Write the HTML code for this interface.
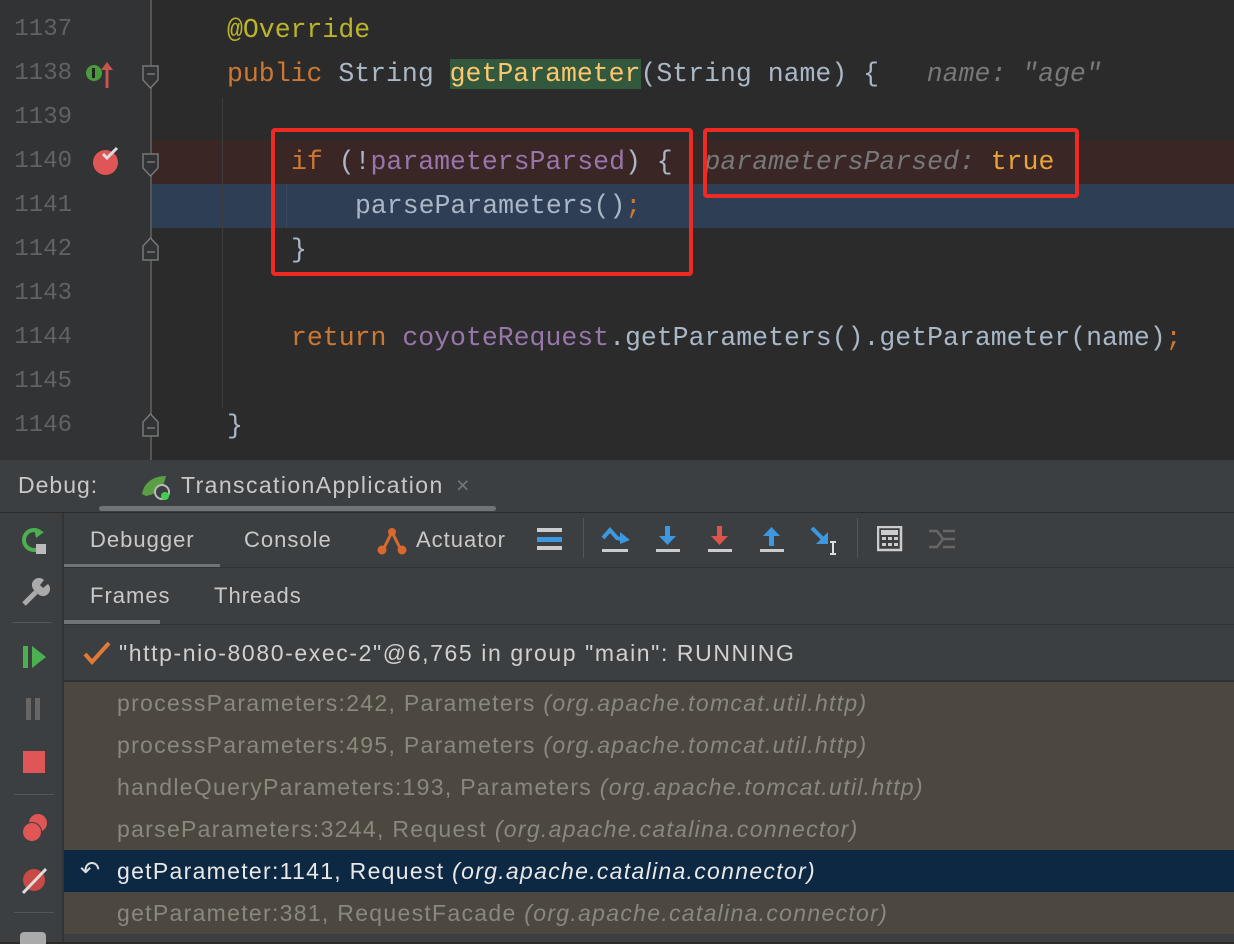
<!DOCTYPE html>
<html><head><meta charset="utf-8"><style>
*{margin:0;padding:0;box-sizing:border-box}
body{width:1234px;height:942px;overflow:hidden;background:#2b2b2b;position:relative;font-family:"Liberation Sans",sans-serif}
.a{position:absolute}
.code{font-family:"Liberation Mono",monospace;font-size:26.5px;color:#a9b7c6;white-space:pre;line-height:44px;height:44px}
.ln{font-family:"Liberation Mono",monospace;font-size:24px;color:#606366;width:72px;text-align:right;left:0;line-height:44px}
.kw{color:#cc7832}.an{color:#bbb529}.fd{color:#9876aa}.hint{color:#787878;font-style:italic}
.ui{color:#c8c8c8;font-size:22px;line-height:1;letter-spacing:1px}
.fr{left:64px;width:1170px;height:42px;background:#4d483f;line-height:42px;font-size:23px;letter-spacing:1.3px;color:#8a877f;padding-left:53px;white-space:nowrap}
.fr i{font-style:italic}
</style></head><body>
<div class="a" style="left:0;top:0;width:152px;height:460px;background:#313335"></div>
<div class="a" style="left:150px;top:0;width:2px;height:460px;background:#555"></div>
<div class="a" style="left:152px;top:140px;width:1082px;height:44px;background:#3b2626"></div>
<div class="a" style="left:152px;top:184px;width:1082px;height:44px;background:#2d3e55"></div>
<div class="a" style="left:222px;top:98px;width:1px;height:310px;background:#3c3c3c"></div>
<div class="a" style="left:286px;top:184px;width:1px;height:44px;background:#3c4a5c"></div>
<div class="a ln" style="top:8px">1137</div>
<div class="a ln" style="top:52px">1138</div>
<div class="a ln" style="top:96px">1139</div>
<div class="a ln" style="top:140px">1140</div>
<div class="a ln" style="top:184px">1141</div>
<div class="a ln" style="top:228px">1142</div>
<div class="a ln" style="top:272px">1143</div>
<div class="a ln" style="top:316px">1144</div>
<div class="a ln" style="top:360px">1145</div>
<div class="a ln" style="top:404px">1146</div>
<div class="a" style="left:86px;top:65px;width:16px;height:16px;border-radius:50%;background:#4a9c3a"></div>
<div class="a" style="left:92px;top:68px;width:3px;height:10px;background:#222"></div>
<svg class="a" style="left:100px;top:60px" width="14" height="28"><path d="M7 8v20" stroke="#c75450" stroke-width="3"/><path d="M1 10l6-8 6 8z" fill="#c75450"/></svg>
<div class="a" style="left:93px;top:150px;width:25px;height:25px;border-radius:50%;background:#e05555"></div>
<svg class="a" style="left:100px;top:146px" width="22" height="16"><path d="M3 8l4 4 10-10" stroke="#ddd" stroke-width="3" fill="none"/></svg>
<svg class="a" style="left:141px;top:64px" width="20" height="26"><path d="M2 2h15v14l-7.5 8-7.5-8z" fill="#313335" stroke="#777" stroke-width="1.5"/><path d="M6 10h8" stroke="#777" stroke-width="1.5"/></svg>
<svg class="a" style="left:141px;top:152px" width="20" height="26"><path d="M2 2h15v14l-7.5 8-7.5-8z" fill="#313335" stroke="#777" stroke-width="1.5"/><path d="M6 10h8" stroke="#777" stroke-width="1.5"/></svg>
<svg class="a" style="left:141px;top:236px" width="20" height="26"><path d="M2 24h15v-14l-7.5-8-7.5 8z" fill="#313335" stroke="#777" stroke-width="1.5"/><path d="M6 16h8" stroke="#777" stroke-width="1.5"/></svg>
<svg class="a" style="left:141px;top:412px" width="20" height="26"><path d="M2 24h15v-14l-7.5-8-7.5 8z" fill="#313335" stroke="#777" stroke-width="1.5"/><path d="M6 16h8" stroke="#777" stroke-width="1.5"/></svg>
<div class="a code an" style="left:227px;top:8px">@Override</div>
<div class="a code" style="left:227px;top:52px"><span class="kw">public</span> String <span style="background:#32593d;color:#ffc66d">getParameter</span>(String name) {   <span class="hint">name: "age"</span></div>
<div class="a code" style="left:291px;top:140px"><span class="kw">if</span> (!<span class="fd">parametersParsed</span>) {  <span class="hint">parametersParsed: </span><span class="kw" style="color:#e8a33a">true</span></div>
<div class="a code" style="left:355px;top:184px">parseParameters()<span class="kw">;</span></div>
<div class="a code" style="left:291px;top:228px">}</div>
<div class="a code" style="left:291px;top:316px"><span class="kw">return</span> <span class="fd">coyoteRequest</span>.getParameters().getParameter(name)<span class="kw">;</span></div>
<div class="a code" style="left:227px;top:404px">}</div>
<div class="a" style="left:271px;top:128px;width:422px;height:148px;border:4px solid #ee2a24;border-radius:4px"></div>
<div class="a" style="left:703px;top:128px;width:376px;height:70px;border:4px solid #ee2a24;border-radius:4px"></div>
<div class="a" style="left:0;top:460px;width:1234px;height:482px;background:#3c3f41"></div>
<div class="a" style="left:0;top:512px;width:1234px;height:1px;background:#2b2b2b"></div>
<div class="a ui" style="left:18px;top:474px;font-size:23px">Debug:</div>
<svg class="a" style="left:140px;top:472px" width="36" height="30"><path d="M2 22c2-12 12-18 24-18-2 10-8 18-20 20z" fill="#5a9e45"/><circle cx="22" cy="20" r="7" fill="#3c3f41" stroke="#bbb" stroke-width="2"/><circle cx="25" cy="24" r="4" fill="#3fd14a"/></svg>
<div class="a ui" style="left:181px;top:474px;font-size:23px;letter-spacing:1.4px">TranscationApplication</div>
<div class="a ui" style="left:456px;top:474px;color:#777;font-size:23px">×</div>
<div class="a" style="left:99px;top:506px;width:397px;height:5px;border-radius:3px;background:#6f7478"></div>
<div class="a" style="left:62px;top:513px;width:2px;height:429px;background:#323436"></div>
<svg class="a" style="left:20px;top:526px" width="30" height="30"><path d="M20 6a10 10 0 1 0 2 14" stroke="#4bb150" stroke-width="4" fill="none"/><path d="M14 2l10 4-8 6z" fill="#4bb150"/><rect x="16" y="18" width="10" height="10" fill="#bbb"/></svg>
<svg class="a" style="left:20px;top:578px" width="30" height="30"><path d="M4 26l12-12" stroke="#aaa" stroke-width="5"/><path d="M14 12a7 7 0 0 1 10-10l-4 5 3 3 5-4a7 7 0 0 1-10 10z" fill="#aaa"/></svg>
<div class="a" style="left:12px;top:622px;width:40px;height:1px;background:#555"></div>
<svg class="a" style="left:22px;top:644px" width="28" height="26"><rect x="1" y="2" width="5" height="22" fill="#4bb150"/><path d="M10 2l14 11-14 11z" fill="#4bb150"/></svg>
<div class="a" style="left:26px;top:698px;width:5px;height:22px;background:#666"></div>
<div class="a" style="left:35px;top:698px;width:5px;height:22px;background:#666"></div>
<div class="a" style="left:23px;top:751px;width:22px;height:22px;background:#e05555"></div>
<div class="a" style="left:14px;top:794px;width:40px;height:1px;background:#555"></div>
<div class="a" style="left:29px;top:814px;width:18px;height:18px;border-radius:50%;background:#e05555"></div>
<div class="a" style="left:22px;top:822px;width:20px;height:20px;border-radius:50%;background:#e05555;border:1px solid #3c3f41"></div>
<div class="a" style="left:23px;top:869px;width:22px;height:22px;border-radius:50%;background:#c74a45"></div>
<svg class="a" style="left:20px;top:866px" width="30" height="30"><path d="M3 27L26 3" stroke="#ddd" stroke-width="3"/></svg>
<div class="a" style="left:14px;top:912px;width:40px;height:1px;background:#555"></div>
<div class="a" style="left:20px;top:932px;width:26px;height:12px;border-radius:4px 4px 0 0;background:#aaa"></div>
<div class="a ui" style="left:90px;top:529px">Debugger</div>
<div class="a" style="left:64px;top:564px;width:156px;height:4px;background:#6f7478"></div>
<div class="a ui" style="left:244px;top:529px">Console</div>
<svg class="a" style="left:376px;top:526px" width="32" height="30"><path d="M7 24L16 6l9 18" stroke="#d9682f" stroke-width="3" fill="none"/><circle cx="16" cy="6" r="4" fill="#d9682f"/><circle cx="6" cy="24" r="4.5" fill="#d9682f"/><circle cx="26" cy="24" r="4.5" fill="#d9682f"/></svg>
<div class="a ui" style="left:416px;top:529px">Actuator</div>
<svg class="a" style="left:537px;top:527px" width="26" height="24"><rect y="1" width="25" height="4" fill="#ccc"/><rect y="10" width="25" height="5" fill="#3d98e0"/><rect y="19" width="25" height="4" fill="#ccc"/></svg>
<div class="a" style="left:583px;top:518px;width:1px;height:40px;background:#555"></div>
<svg class="a" style="left:600px;top:526px" width="32" height="28"><path d="M3 12l7-8 7 8 7 2" stroke="#3d98e0" stroke-width="4" fill="none"/><path d="M20 6l10 8-10 4z" fill="#3d98e0"/><rect x="2" y="23" width="26" height="3" fill="#ccc"/></svg>
<svg class="a" style="left:654px;top:524px" width="28" height="30"><rect x="11" y="2" width="5" height="12" fill="#3d98e0"/><path d="M5 12h17l-8.5 9z" fill="#3d98e0"/><rect x="2" y="25" width="24" height="3" fill="#ccc"/></svg>
<svg class="a" style="left:706px;top:524px" width="28" height="30"><rect x="11" y="2" width="5" height="12" fill="#e0534a"/><path d="M5 12h17l-8.5 9z" fill="#e0534a"/><rect x="2" y="25" width="24" height="3" fill="#ccc"/></svg>
<svg class="a" style="left:758px;top:524px" width="28" height="30"><rect x="11" y="10" width="5" height="12" fill="#3d98e0"/><path d="M5 12h17l-8.5-9z" fill="#3d98e0"/><rect x="2" y="25" width="24" height="3" fill="#ccc"/></svg>
<svg class="a" style="left:810px;top:524px" width="32" height="32"><path d="M2 4l12 12" stroke="#3d98e0" stroke-width="4"/><path d="M18 8v12H6z" fill="#3d98e0"/><path d="M20 18h6M23 18v12M20 30h6" stroke="#ddd" stroke-width="2"/></svg>
<div class="a" style="left:857px;top:518px;width:1px;height:40px;background:#555"></div>
<svg class="a" style="left:877px;top:526px" width="26" height="26"><rect x="1" y="1" width="23" height="23" fill="none" stroke="#ccc" stroke-width="2.5"/><rect x="4" y="4" width="17" height="5" fill="#ccc"/><g fill="#ccc"><rect x="5" y="11" width="4" height="3"/><rect x="11" y="11" width="4" height="3"/><rect x="17" y="11" width="4" height="3"/><rect x="5" y="17" width="4" height="3"/><rect x="11" y="17" width="4" height="3"/><rect x="17" y="17" width="4" height="3"/></g></svg>
<svg class="a" style="left:928px;top:528px" width="28" height="22"><path d="M1 3h8l6 8-6 8H1M15 11h12M15 3h12M15 19h12" stroke="#666" stroke-width="2.5" fill="none"/></svg>
<div class="a" style="left:64px;top:567px;width:1170px;height:1px;background:#2f3133"></div>
<div class="a ui" style="left:90px;top:585px">Frames</div>
<div class="a" style="left:64px;top:620px;width:96px;height:4px;background:#6f7478"></div>
<div class="a ui" style="left:214px;top:585px">Threads</div>
<div class="a" style="left:64px;top:624px;width:1170px;height:1px;background:#2f3133"></div>
<svg class="a" style="left:82px;top:640px" width="30" height="26"><path d="M3 14l7 8L27 3" stroke="#e07a35" stroke-width="4" fill="none"/></svg>
<div class="a ui" style="left:119px;top:642px;font-size:23px;letter-spacing:1.6px;color:#d0d0d0">"http-nio-8080-exec-2"@6,765 in group "main": RUNNING</div>
<div class="a" style="left:64px;top:680px;width:1170px;height:2px;background:#2f3133"></div>
<div class="a fr" style="top:682px">processParameters:242, Parameters <i>(org.apache.tomcat.util.http)</i></div>
<div class="a fr" style="top:724px">processParameters:495, Parameters <i>(org.apache.tomcat.util.http)</i></div>
<div class="a fr" style="top:766px">handleQueryParameters:193, Parameters <i>(org.apache.tomcat.util.http)</i></div>
<div class="a fr" style="top:808px">parseParameters:3244, Request <i>(org.apache.catalina.connector)</i></div>
<div class="a fr" style="top:850px;background:#0d2843;color:#e8e8e8">getParameter:1141, Request <i>(org.apache.catalina.connector)</i></div>
<div class="a ui" style="left:80px;top:859px;font-size:24px;color:#ddd">↶</div>
<div class="a fr" style="top:892px">getParameter:381, RequestFacade <i>(org.apache.catalina.connector)</i></div>
<div class="a" style="left:64px;top:934px;width:1170px;height:8px;background:#3c3f41"></div>
</body></html>
